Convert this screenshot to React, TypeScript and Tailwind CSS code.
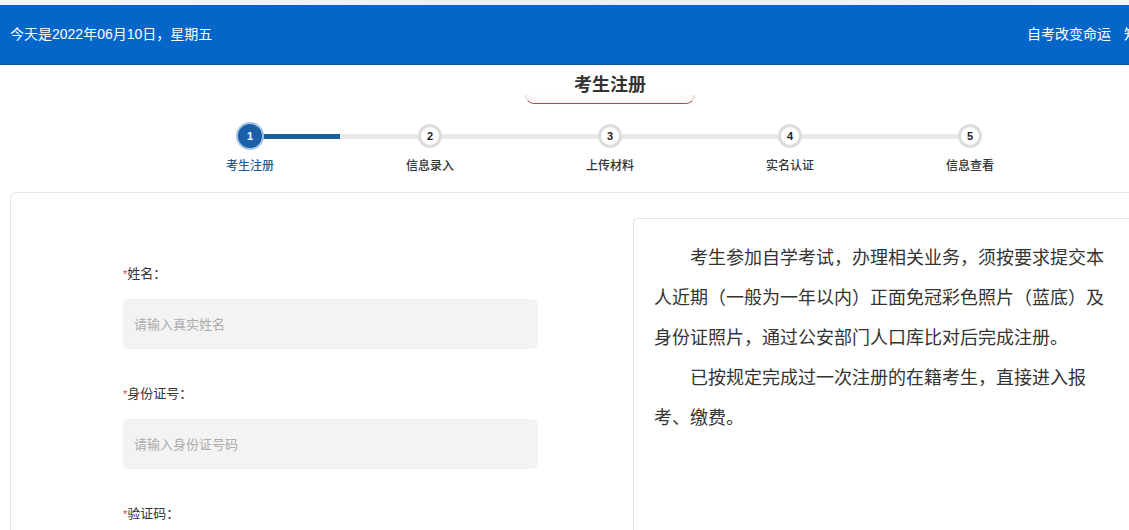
import React from "react";

const steps = ["考生注册", "信息录入", "上传材料", "实名认证", "信息查看"];

function Field({ label, placeholder }: { label: string; placeholder?: string }) {
  return (
    <div className="flex flex-col">
      <div className="h-[20px] leading-[20px] text-[13px] text-[#333]">
        <span className="text-[#e04040] text-[11px] align-top">*</span>
        {label}
      </div>
      {placeholder !== undefined && (
        <input
          readOnly
          placeholder={placeholder}
          className="mt-[15px] mb-[35px] h-[50px] w-[415px] rounded-[6px] bg-[#f3f3f3] pl-[11px] text-[13px] text-[#333] outline-none placeholder:text-[#ababab]"
        />
      )}
    </div>
  );
}

export default function App() {
  return (
    <div className="w-[1129px] h-[530px] overflow-hidden bg-white font-['Liberation_Sans','Noto_Sans_CJK_SC',sans-serif]">
      <div className="w-[1220px]">
        <div className="h-[5px] bg-gradient-to-r from-[#f4f7fa] via-[#e9eef3] to-[#f4f7fa]" />
        <div className="h-[60px] bg-[#0566c9] border-b border-[#0a5aa8] flex items-center text-white text-[14px]">
          <div className="w-[1200px] ml-[10px] flex items-center">
            <div className="flex-1 whitespace-nowrap">今天是2022年06月10日，星期五</div>
            <div className="flex whitespace-nowrap mr-[2px]">
              <span>自考改变命运</span>
              <span className="ml-[13px]">知识成就梦想</span>
            </div>
          </div>
        </div>

        <div className="w-[1200px] ml-[10px]">
          <div className="flex flex-col items-center mt-[8px]">
            <div className="h-[24px] leading-[24px] text-[18px] font-bold text-[#333]">考生注册</div>
            <div className="w-[170px] h-[9px] -mt-[2px] rounded-b-[12px] border-b-[1.5px] border-x border-b-[#a84a48] border-x-[#cfcfcf] bg-[#fffafa]" />
          </div>

          <div className="relative w-[900px] mx-auto mt-[20px] flex">
            <div className="absolute left-[90px] right-[90px] top-[10px] h-[5px] bg-[#e9e9e9]" />
            <div className="absolute left-[90px] w-[90px] top-[10px] h-[5px] bg-[#1a5f9c]" />
            {steps.map((s, i) => (
              <div key={s} className="relative flex-1 flex flex-col items-center">
                {i === 0 ? (
                  <div className="w-[24px] h-[24px] rounded-full bg-[#1d5ea8] ring-2 ring-[#a9c4e2] flex items-center justify-center text-white text-[11px] font-bold">
                    {i + 1}
                  </div>
                ) : (
                  <div className="w-[24px] h-[24px] rounded-full bg-white border-[3px] border-[#dcdcdc] flex items-center justify-center text-[#222] text-[11px] font-bold">
                    {i + 1}
                  </div>
                )}
                <div
                  className={
                    "mt-[10px] h-[16px] leading-[16px] text-[12px] font-medium " +
                    (i === 0 ? "text-[#1a5f9c]" : "text-[#333]")
                  }
                >
                  {s}
                </div>
              </div>
            ))}
          </div>

          <div className="mt-[18px] h-[400px] border border-[#e6e6e6] rounded-[6px] flex">
            <div className="w-[600px] pl-[112px] pt-[71px]">
              <Field label="姓名：" placeholder="请输入真实姓名" />
              <Field label="身份证号：" placeholder="请输入身份证号码" />
              <Field label="验证码：" />
            </div>
            <div className="ml-[22px] mt-[25px] w-[520px] h-[360px] border border-[#e3e3e3] rounded-tl-[4px] pl-[20px] pr-[40px] pt-[19px] text-[18px] leading-[40px] text-[#333]">
              <p className="indent-[36px]">
                考生参加自学考试，办理相关业务，须按要求提交本人近期（一般为一年以内）正面免冠彩色照片（蓝底）及身份证照片，通过公安部门人口库比对后完成注册。
              </p>
              <p className="indent-[36px]">已按规定完成过一次注册的在籍考生，直接进入报考、缴费。</p>
            </div>
          </div>
        </div>
      </div>
    </div>
  );
}
